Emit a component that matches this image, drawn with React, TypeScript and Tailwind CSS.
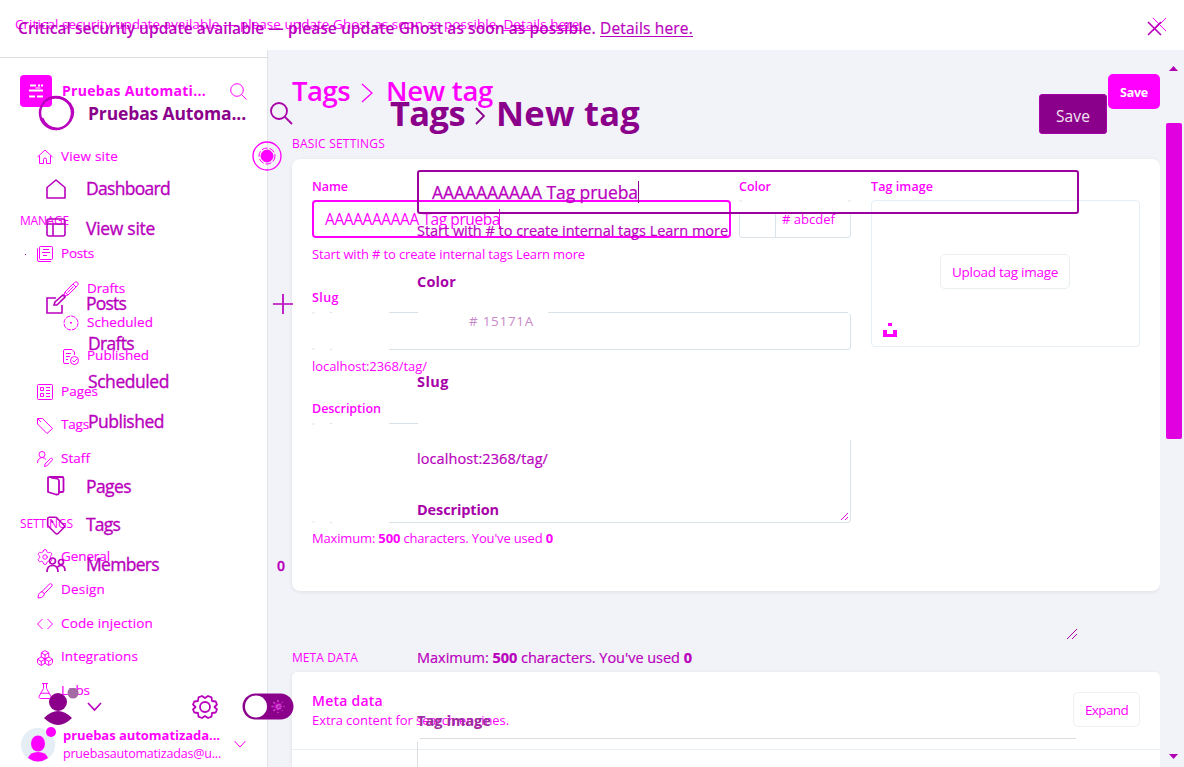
import { useLayoutEffect, useRef, type ReactNode } from "react";
import { Boxes, FlaskConical, Settings, Tag } from "lucide-react";

/** Text run whose tracking is adjusted so that it spans `w` pixels. */
function Run({ w, className = "", children }: { w: number; className?: string; children: ReactNode }) {
  const ref = useRef<HTMLSpanElement>(null);
  useLayoutEffect(() => {
    const el = ref.current;
    if (!el) return;
    el.style.letterSpacing = "0px";
    const natural = el.getBoundingClientRect().width;
    const n = (el.textContent || "").length;
    if (n > 0) el.style.letterSpacing = `${(w - natural) / n}px`;
  }, [w]);
  return (
    <span ref={ref} className={`inline-block whitespace-pre shrink-0 self-center ${className}`}>
      {children}
    </span>
  );
}

function Glyph({ children, size = 16, sw = 1 }: { children: ReactNode; size?: number; sw?: number }) {
  return (
    <svg className="shrink-0" width={size} height={size} viewBox="0 0 16 16" fill="none" stroke="currentColor" strokeWidth={sw}>
      {children}
    </svg>
  );
}

const home = <Glyph><path d="M.5 8 8 1l7.500 7M2.500 6.500v8h4v-4a1.500 1.500 0 0 1 3 0v4h4v-8" /></Glyph>;
const posts = <Glyph><rect x="2.500" y=".5" width="13" height="13" rx="1" /><path d="M.5 2.500V14q0 1.500 1.500 1.500h12M6 3.500h6M5 6.500h8M6 9.500h4" /></Glyph>;
const pencil = <Glyph><path d="m1 15 1-4L11.500 1.500q1.500-1.500 3 0t0 3L5 14zM2 11l3 3M10 3l3 3M4.500 11.500l6-6" /></Glyph>;
const clock = <Glyph><circle cx="8" cy="8" r="7" strokeDasharray="4.500 1" /><path d="M7 7.500h2M8 7v2" /></Glyph>;
const published = <Glyph><path d="M6 14.500H2q-1.500 0-1.500-1.500V2Q.5.5 2 .5h7l2.500 2.500v3M3 4.500h5M3 7.500h4M3 10.500h2" /><circle cx="11.500" cy="11.500" r="4" /><path d="m9.500 11.500 1.500 1.500 3-3" /></Glyph>;
const pages = <Glyph><rect x=".5" y=".5" width="15" height="15" rx="1" /><path d="M3.500 3.500h3v3h-3zM3.500 9.500h3v3h-3zM9 3.500h4M9 6.500h4M9 9.500h4M9 12.500h4" /></Glyph>;
const tag = <Glyph><path d="M.5.500h5L15.500 10.500 10 15.500.5 6zM1 1l3 3" /></Glyph>;
const staff = <Glyph><circle cx="5" cy="3.500" r="3" /><path d="M.5 12q0-4.500 4.500-5.500 2.500 0 4 2M7.500 15.500l.5-2.500 5.500-5.500q1-.7 1.700 0t0 1.700L9.700 15z" /></Glyph>;
const brush = <Glyph><path d="M1 15q0-4 2-5.500t3.500 0 0 3.500-5.500 2zM4.500 9 12.500 1q1-.8 2 0t.5 2L7 11" /></Glyph>;
const code = <Glyph><path d="M5.500 3 .5 8l5 5M10.500 3l5 5-5 5" /></Glyph>;

const baseNav = "flex shrink-0 items-center gap-2 pl-[37px] text-[13.500px] [-webkit-text-stroke:0.15px]";

function NavA({ icon, label, w, sub = false, tall = true }: { icon: ReactNode; label: string; w: number; sub?: boolean; tall?: boolean }) {
  return (
    <div className={`${baseNav} ${sub ? "ml-[26px]" : ""} ${tall ? "h-[34px]" : "h-[33px]"}`}>
      {icon}
      <Run w={w} className="mb-[2px]">{label}</Run>
    </div>
  );
}

function SidebarA() {
  return (
    <aside className="flex w-[268px] shrink-0 flex-col border-r border-[#e1e3e8] bg-white">
      <div className="h-[8px] shrink-0 border-b border-[#dddddd]" />
      <div className="mt-[17px] flex h-8 shrink-0 items-center pl-5">
        <svg width="32" height="32" viewBox="0 0 32 32">
          <rect width="32" height="32" rx="4" fill="#ff00ff" />
          <path d="M10 10.500h6M18 10.500h2M21 10.500h2M9 15.500h14M9 21.500h6M17 21.500h6" stroke="white" strokeWidth="2.200" />
          <path d="M15.500 13h5" stroke="white" />
        </svg>
        <Run w={144} className="mb-[2px] ml-[10px] text-[14px] font-bold">Pruebas Automati...</Run>
        <svg className="ml-6" width="17" height="17" viewBox="0 0 17 17" fill="none" stroke="currentColor"><circle cx="7" cy="7" r="6.300" /><path d="m11.500 11.500 5 5" /></svg>
      </div>
      <div className="mt-[33px] flex flex-col">
        <NavA icon={home} label="View site" w={57} />
      </div>
      <div className="mt-[29px] flex h-[35px] items-center pl-5 text-[12px]"><Run w={49}>MANAGE</Run></div>
      <div className="-mt-px flex items-center">
        <span className="-mr-[26px] ml-[25px] h-px w-px bg-[#c000c0]" />
        <NavA icon={posts} label="Posts" w={33} />
      </div>
      <div className="mt-[1px] flex flex-col">
        <NavA icon={pencil} label="Drafts" w={38} sub />
        <NavA icon={clock} label="Scheduled" w={66} sub />
        <NavA icon={published} label="Published" w={62} sub tall={false} />
      </div>
      <div className="mt-[2px] flex flex-col">
        <NavA icon={pages} label="Pages" w={37} />
        <NavA icon={tag} label="Tags" w={28} tall={false} />
        <NavA icon={staff} label="Staff" w={29} />
      </div>
      <div className="mt-[30px] flex h-[35px] items-center pl-5 text-[12px]"><Run w={53}>SETTINGS</Run></div>
      <div className="-mt-px flex flex-col">
        <NavA icon={<Settings size={18} strokeWidth={1.3} className="-mr-px -ml-px" />} label="General" w={49} />
        <NavA icon={brush} label="Design" w={44} tall={false} />
        <NavA icon={code} label="Code injection" w={92} />
        <NavA icon={<Boxes size={18} strokeWidth={1.3} className="-mr-px -ml-px" />} label="Integrations" w={77} tall={false} />
        <NavA icon={<FlaskConical size={18} strokeWidth={1.3} className="-mr-px -ml-px" />} label="Labs" w={29} />
      </div>
      <div className="mt-[18px] flex h-[36px] shrink-0 items-center pl-5">
        <svg width="36" height="38" viewBox="0 0 36 38" className="shrink-0">
          <circle cx="18" cy="20" r="17" fill="#e5eef5" />
          <ellipse cx="18" cy="18.500" rx="7" ry="8" fill="#ff00ff" />
          <path d="M8 33q2-6 10-6t10 6q-10 7-20 0z" fill="#ff00ff" />
          <circle cx="31" cy="7" r="5" fill="#ff00ff" />
        </svg>
        <div className="ml-[7px] flex w-[158px] flex-col items-start">
          <Run w={157} className="h-[18px] self-start text-[13px] leading-[18px] font-bold">pruebas automatizada...</Run>
          <Run w={158} className="h-[18px] self-start text-[12.500px] leading-[20px]">pruebasautomatizadas@u...</Run>
        </div>
        <svg className="ml-[13px]" width="12" height="8" viewBox="0 0 12 8" fill="none" stroke="currentColor"><path d="m.5 1 5.500 6 5.500-6" /></svg>
      </div>
    </aside>
  );
}

const label = "flex h-5 items-center text-[12.500px] font-semibold";
const hint = "flex h-5 items-center pt-px text-[13px]";
const faint = "h-[2px] w-[3px] bg-[#edf3f6]";

function FormA() {
  return (
    <section className="flex h-[432px] shrink-0 rounded-lg bg-white px-5 pt-[18px] shadow-[0_1px_4px_rgba(0,0,0,0.08)]">
      <div className="flex w-[539px] shrink-0 flex-col">
        <div className="flex">
          <div className="flex w-[419px] flex-col">
            <div className={label}><Run w={36}>Name</Run></div>
            <div className="mt-[3px] flex h-[38px] items-center rounded-[4px] border-2 border-[#ff00ff] pt-[2px] pl-[11px] text-[15.500px]">
              <Run w={175}>AAAAAAAAAA Tag prueba</Run>
              <span className="mb-[2px] -ml-px h-[20px] w-px bg-[#ff00ff]" />
            </div>
          </div>
          <div className="ml-2 flex w-[112px] flex-col">
            <div className={label}><Run w={32}>Color</Run></div>
            <div className="mt-[3px] mb-3 flex h-[2px] justify-between"><div className={faint} /><div className={faint} /></div>
            <div className="flex h-6 rounded-b-[4px] border-x border-b border-[#dae4ea]">
              <div className="w-9 border-r border-[#dae4ea]" />
              <div className="flex h-[11px] pl-[6px] text-[13px] leading-[11px]"><Run w={53}># abcdef</Run></div>
            </div>
          </div>
        </div>
        <div className={`mt-[6px] ${hint}`}><Run w={273}>Start with # to create internal tags Learn more</Run></div>
        <div className={`mt-6 ${label}`}><Run w={27}>Slug</Run></div>
        <div className="mt-[4px] flex h-[38px]">
          <div className="flex w-[77px] flex-col justify-between">
            <div className="flex gap-[15px]"><div className={faint} /><div className="h-px w-[2px] bg-[#d7e3e9]" /></div>
            <div className="flex items-end gap-[15px]"><div className={faint} /><div className="h-px w-[2px] bg-[#d7e3e9]" /></div>
          </div>
          <div className="flex flex-1 flex-col">
            <div className="flex h-px justify-between">
              <div className="w-[29px] bg-[#d7e3e9]" />
              <div className="mr-[3px] w-[300px] bg-[#d7e3e9]" />
            </div>
            <div className="h-[37px] rounded-r-[4px] border-r border-b border-[#d7e3e9]" />
          </div>
        </div>
        <div className={`mt-[6px] ${hint}`}><Run w={115}>localhost:2368/tag/</Run></div>
        <div className={`mt-[23px] ${label}`}><Run w={69}>Description</Run></div>
        <div className="mt-[4px] flex h-[100px]">
          <div className="flex w-[77px] flex-col justify-between">
            <div className="flex gap-[15px]"><div className={faint} /><div className="h-px w-[2px] bg-[#d7e3e9]" /></div>
            <div className="flex items-end gap-[15px]"><div className={faint} /><div className="h-px w-[2px] bg-[#d7e3e9]" /></div>
          </div>
          <div className="flex flex-1 flex-col">
            <div className="h-px w-[29px] bg-[#d7e3e9]" />
            <div className="mt-4 flex flex-1 items-end justify-end rounded-br-[4px] border-r border-b border-[#d7e3e9]">
              <svg width="10" height="10" viewBox="0 0 10 10" stroke="#e000e0"><path d="m1 8 7-7M5 8l3-3" /></svg>
            </div>
          </div>
        </div>
        <div className="mt-[5px] flex h-5 items-center pt-[2px] text-[13px]"><Run w={241}>Maximum: <b>500</b> characters. You've used <b>0</b></Run></div>
      </div>
      <div className="ml-5 flex w-[269px] flex-col">
        <div className={label}><Run w={62}>Tag image</Run></div>
        <div className="mt-[3px] flex h-[147px] flex-col items-center rounded-[4px] border border-[#e5eff5]">
          <div className="mt-[53px] mr-px flex h-[35px] w-[130px] items-center justify-center rounded-[5px] border border-[#e9eff1] pt-[2px] text-[13.500px]">
            <Run w={106}>Upload tag image</Run>
          </div>
          <svg className="mt-[34px] ml-[11px] self-start" width="14" height="14" viewBox="0 0 14 14" fill="#ff00ff"><path d="M5 0h4v3H5zM0 7h4v4h6V7h4v7H0z" /></svg>
        </div>
      </div>
    </section>
  );
}

function MainA() {
  return (
    <main className="flex w-[892px] shrink-0 flex-col bg-[#f2f3f8] pl-6">
      <div className="mt-6 flex h-[35px] shrink-0 items-center">
        <Run w={58} className="mb-px text-[27.500px] leading-[32px] font-semibold">Tags</Run>
        <svg className="mt-[2px] ml-[11px]" width="13" height="20" viewBox="0 0 13 20" fill="none" stroke="currentColor" strokeWidth="1.300"><path d="m1 1 10 9-10 9" /></svg>
        <Run w={107} className="mb-px ml-3 text-[27.500px] leading-[32px] font-semibold">New tag</Run>
        <div className="ml-auto flex h-[35px] w-[52px] items-center justify-center rounded-[5px] bg-[#ff00ff] pt-[3px] text-[12.500px] font-bold text-white"><Run w={28}>Save</Run></div>
      </div>
      <div className="mt-[25px] flex h-5 shrink-0 items-center text-[12px]"><Run w={93}>BASIC SETTINGS</Run></div>
      <div className="h-[5px] shrink-0" />
      <FormA />
      <div className="mt-[57px] flex h-5 shrink-0 items-center text-[12px]"><Run w={66}>META DATA</Run></div>
      <section className="mt-1 flex h-24 flex-col rounded-t-[5px] bg-white shadow-[0_1px_4px_rgba(0,0,0,0.08)]">
        <div className="flex h-[78px] border-b border-[#e5eff5] px-5 pt-5">
          <div className="flex flex-col">
            <div className="flex h-[18px] items-center pb-[2px] text-[14px] font-semibold"><Run w={71}>Meta data</Run></div>
            <div className="flex h-5 items-center pt-[2px] text-[13px]"><Run w={197}>Extra content for search engines.</Run></div>
          </div>
          <div className="ml-auto flex h-[35px] w-[67px] items-center justify-center rounded-[5px] border border-[#edf1f3] pt-[2px] text-[13.500px]"><Run w={43}>Expand</Run></div>
        </div>
      </section>
    </main>
  );
}

function Scrollbar() {
  return (
    <div className="flex flex-1 flex-col bg-[#f2f3f8] pl-[6px]">
      <svg className="mt-4 ml-[3px]" width="9" height="5" fill="#b400b4"><path d="m0 5 4.500-5L9 5z" /></svg>
      <div className="mt-[52px] h-[316px] w-4 rounded-[2px] bg-[#e000e0]" />
      <svg className="mt-[315px] ml-[3px]" width="9" height="5" fill="#b400b4"><path d="m0 0 4.500 5L9 0z" /></svg>
    </div>
  );
}

function NavB({ icon, text, w, className, children }: { icon?: ReactNode; text: string; w: number; className: string; children?: ReactNode }) {
  return (
    <div className={`flex h-5 shrink-0 items-center text-[17.500px] font-medium [-webkit-text-stroke:0.35px] ${className}`}>
      <div className="flex w-5 justify-center">{icon}</div>
      <Run w={w} className={icon ? "mb-px ml-5" : "mb-px ml-[22px]"}>{text}</Run>
      {children}
    </div>
  );
}

function SidebarB() {
  return (
    <div className="flex w-[300px] shrink-0 flex-col pl-[38px]">
      <div className="mt-[43px] flex h-10 shrink-0 items-center">
        <svg width="37" height="36" viewBox="0 0 37 36" fill="none" stroke="currentColor"><circle cx="18" cy="18" r="16" strokeWidth="2.500" /><path d="M10 4q12-5 22 5 6 8 0 17M4 23q4 10 15 11" strokeWidth="2.500" /></svg>
        <Run w={158} className="ml-[13px] text-[17.500px] font-bold text-[#8b008b]">Pruebas Automa...</Run>
        <svg className="ml-6" width="23" height="23" viewBox="0 0 23 23" fill="none" stroke="#a800a8" strokeWidth="1.800"><circle cx="9" cy="9" r="8" /><path d="m15 15 7 7" /></svg>
      </div>
      <div className="flex flex-col pl-[8px]">
        <NavB className="mt-[46px]" text="Dashboard" w={84} icon={<svg width="20" height="20" viewBox="0 0 20 20" fill="none" stroke="currentColor" strokeWidth="1.600"><path d="M1 8.500 10 1l9 7.500V19H1z" strokeLinejoin="round" /></svg>} />
        <NavB className="mt-5" text="View site" w={69} icon={<svg className="mb-[3px]" width="20" height="20" viewBox="0 0 20 20" fill="none" stroke="currentColor" strokeWidth="1.600"><rect x="1" y="1" width="18" height="17" rx="2" /><path d="M1 6h18M7 6v12" /></svg>} />
        <NavB className="mt-[55px]" text="Posts" w={40} icon={<svg width="20" height="20" viewBox="0 0 20 20" fill="none" stroke="currentColor" strokeWidth="1.600"><path d="M10 4H1v15h15v-8M8 11l1-3 8-7 2 2-8 8z" /></svg>}>
          <svg className="ml-[147px]" width="20" height="20" stroke="currentColor" strokeWidth="1.700"><path d="M10 0v20M0 10h20" /></svg>
        </NavB>
        <NavB className="mt-5" text="Drafts" w={46} />
        <NavB className="mt-[18px]" text="Scheduled" w={81} />
        <NavB className="mt-5" text="Published" w={76} />
        <NavB className="mt-[45px]" text="Pages" w={45} icon={<svg className="mb-[3px]" width="18" height="20" viewBox="0 0 18 20" fill="none" stroke="currentColor" strokeWidth="1.800"><path d="M1 2q0-1 2-1h12q1.500 0 1.500 1.500V15q0 1-1.500 1h-3M1 2v14l8 2.500q3 .5 3-2V5q0-2-2-2.500L4 1.500" strokeLinejoin="round" /></svg>} />
        <NavB className="mt-[18px]" text="Tags" w={34} icon={<Tag size={21} strokeWidth={1.8} />} />
        <NavB className="mt-5" text="Members" w={73} icon={
          <svg width="20" height="16" viewBox="0 0 20 16" fill="none" stroke="currentColor" strokeWidth="1.700"><circle cx="6.500" cy="4" r="3" /><circle cx="15" cy="5" r="2.500" /><path d="M1 15q0-6.500 5.500-6.500T12 15M11 10.500q1.500-2 4-2 4 0 4 5.500" /></svg>
        }>
          <span className="ml-[118px] text-[14px] font-semibold">0</span>
        </NavB>
      </div>
      <div className="mt-[112px] flex h-10 shrink-0 items-center pl-[3px]">
        <svg width="38" height="38" viewBox="0 0 38 38" fill="#8b008b"><circle cx="17" cy="14" r="9" /><path d="M3 30q14-14 28 0-14 14-28 0z" /><circle cx="32" cy="5" r="5.500" fill="#a36aa5" /></svg>
        <svg className="ml-[7px]" width="16" height="10" viewBox="0 0 16 10" fill="none" stroke="currentColor" strokeWidth="1.600"><path d="m2 1 6.500 7L15 1" /></svg>
        <svg className="ml-[90px]" width="26" height="26" viewBox="0 0 26 26" fill="none" stroke="currentColor" strokeWidth="1.800" strokeLinejoin="round">
          <circle cx="13" cy="13" r="5" />
          <path d="m10 2 3 2 3-2 3.500 1.300.5 3.700 3.700.5L25 10.500 22.500 13 25 15.500l-1.300 3L20 19l-.5 3.700L16 24l-3-2-3 2-3.500-1.300L6 19l-3.700-.5L1 15.500 3.500 13 1 10.500l1.300-3L6 7l.5-3.700z" />
        </svg>
        <svg className="ml-6 mb-px shrink-0" width="52" height="27" viewBox="0 0 52 27"><rect x=".5" y=".5" width="51" height="26" rx="13" fill="#8b008b" /><circle cx="14" cy="13.500" r="11" fill="white" /><circle cx="36" cy="13.500" r="4" fill="#b400b4" /><path d="M36 7v13M29.500 13.500h13M31.500 9l9 9M31.500 18l9-9" stroke="#c850c8" strokeWidth="1.500" strokeDasharray="2 2" /></svg>
      </div>
    </div>
  );
}

const hintB = "flex h-5 items-center pt-[2px] text-[14.500px] [-webkit-text-stroke:0.2px]";
const labelB = "flex h-5 items-center text-[14.500px] font-bold";

function MainB() {
  return (
    <div className="flex w-[779px] shrink-0 flex-col pl-[117px]">
      <div className="mt-[44px] -mr-[28px] -ml-[27px] flex h-10 shrink-0 items-center text-[34.500px] leading-[38px] font-bold text-[#8b008b]">
        <Run w={75} className="mb-[3px]">Tags</Run>
        <svg className="mt-1 ml-[10px]" width="10" height="18" viewBox="0 0 10 18" fill="none" stroke="currentColor" strokeWidth="1.800"><path d="m1 1 8 8-8 8" /></svg>
        <Run w={144} className="mb-[3px] ml-[11px]">New tag</Run>
        <div className="ml-auto flex h-10 w-[68px] items-center justify-center rounded-[3px] border border-[#a800a8] bg-[#8b008b] pt-[3px] text-[15.500px] font-medium text-[#f4e6f4]"><Run w={34}>Save</Run></div>
      </div>
      <div className="mt-9 flex h-11 shrink-0 items-center rounded-[3px] border-2 border-[#9b009f] pl-[13px] text-[17.500px] [-webkit-text-stroke:0.25px]">
        <Run w={206}>AAAAAAAAAA Tag prueba</Run>
        <span className="h-[22px] w-px bg-[#8b008b]" />
      </div>
      <div className={`mt-[6px] ${hintB}`}><Run w={311}>Start with # to create internal tags Learn more</Run></div>
      <div className={`mt-8 text-[#a800a8] ${labelB}`}><Run w={39}>Color</Run></div>
      <div className="mt-[19px] flex h-5 items-center pl-[52px] text-[13.500px] text-[#c78ac7]"><Run w={65}># 15171A</Run></div>
      <div className={`mt-[41px] text-[#a800a8] ${labelB}`}><Run w={32}>Slug</Run></div>
      <div className={`mt-[56px] ${hintB}`}><Run w={131}>localhost:2368/tag/</Run></div>
      <div className={`mt-[31px] pt-px text-[#a800a8] ${labelB}`}><Run w={82}>Description</Run></div>
      <svg className="mt-[110px] mr-[2px] shrink-0 self-end" width="10" height="10" stroke="#a800a8"><path d="m0 10 10-10M5 10l5-5" /></svg>
      <div className={`mt-2 ${hintB}`}><Run w={275}>Maximum: <b>500</b> characters. You've used <b>0</b></Run></div>
      <div className={`mt-[43px] pt-[2px] text-[#9b309b] ${labelB}`}><Run w={74}>Tag image</Run></div>
      <div className="mt-[8px] mr-[3px] ml-[3px] h-px shrink-0 bg-[#dddddd]" />
      <div className="mt-[3px] h-[25px] w-px shrink-0 bg-[#dddddd]" />
    </div>
  );
}

export default function App() {
  return (
    <div className="relative h-[767px] w-[1184px] overflow-hidden bg-white font-['Open_Sans','Noto_Sans',sans-serif] text-[#ff00ff]">
      <div className="flex h-full flex-col">
        <header className="flex h-[50px] shrink-0 items-center justify-between pr-[18px] pl-[15px] text-[13.500px]">
          <Run w={568} className="mb-[2px]">Critical security update available — please update Ghost as soon as possible. <u>Details here.</u></Run>
          <svg width="13" height="13" className="mb-[2px]" stroke="currentColor"><path d="m0 0 13 13M13 0 0 13" /></svg>
        </header>
        <div className="flex h-[717px] shrink-0">
          <SidebarA />
          <MainA />
          <Scrollbar />
        </div>
      </div>

      <div className="absolute inset-0 flex flex-col text-[#b900bd]">
        <div className="flex h-[50px] shrink-0 items-center pt-[6px] pr-[22px] pl-[18px] text-[15.500px]">
          <Run w={582} className="pt-px font-semibold">Critical security update available — please update Ghost as soon as possible. </Run>
          <Run w={93} className="pt-px underline underline-offset-2 [-webkit-text-stroke:0.2px]">Details here.</Run>
          <svg width="15" height="15" className="ml-auto" stroke="currentColor" strokeWidth="1.600"><path d="m1 1 13 13M14 1 1 14" /></svg>
        </div>
        <div className="flex h-[717px] shrink-0">
          <SidebarB />
          <MainB />
        </div>
      </div>

      <svg className="absolute top-[141px] left-[252px]" width="30" height="30" viewBox="0 0 30 30" fill="none" stroke="#ff00ff">
        <circle cx="15" cy="15" r="14" strokeWidth="1.300" />
        <circle cx="15" cy="15" r="8" strokeDasharray="6 2" />
        <circle cx="15" cy="15" r="6" fill="#ff00ff" />
      </svg>
    </div>
  );
}
